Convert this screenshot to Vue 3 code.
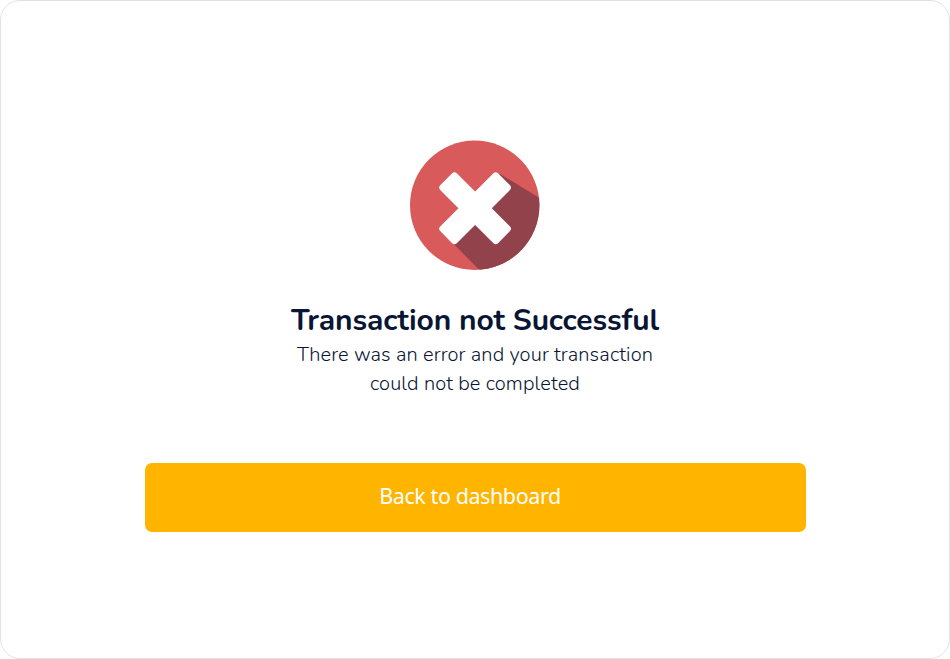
<script setup>
const message = ['There was an error and your transaction', 'could not be completed']
</script>

<template>
  <main class="card">
    <svg class="status-icon" viewBox="0 0 130 130" aria-hidden="true">
      <defs>
        <clipPath id="disc"><circle cx="64.7" cy="65.2" r="64.7" /></clipPath>
      </defs>
      <circle cx="64.7" cy="65.2" r="64.7" fill="#d95a5a" />
      <path clip-path="url(#disc)" d="M90 34 L130 58.3 V130 H69.5 L43.5 103.8 Z" fill="#91424b" />
      <g transform="translate(65.1 68.2) rotate(45)" fill="#fff">
        <rect x="-40.9" y="-11.75" width="81.8" height="23.5" rx="3.6" />
        <rect x="-11.75" y="-40.9" width="23.5" height="81.8" rx="3.6" />
      </g>
    </svg>
    <h1 class="title">Transaction not Successful</h1>
    <p class="message">
      <span v-for="line in message" :key="line" class="line">{{ line }}</span>
    </p>
    <button class="action" type="button">Back to dashboard</button>
  </main>
</template>

<style>
body {
  background: #fff;
}
</style>

<style scoped>
.card {
  box-sizing: border-box;
  width: 950px;
  height: 659px;
  padding-top: 139px;
  display: flex;
  flex-direction: column;
  align-items: center;
  border: 1px solid #e2e2e5;
  border-radius: 20px;
  background: #fff;
  color: #091534;
  font-family: Nunito, Lato, sans-serif;
}
.status-icon {
  width: 130px;
  height: 130px;
  flex: none;
}
.title {
  margin: 31px 0 0;
  font-size: 30px;
  font-weight: 700;
  line-height: 39px;
  letter-spacing: -0.14px;
  white-space: nowrap;
}
.message {
  margin: 0;
  font-size: 20px;
  font-weight: 300;
  line-height: 29px;
  letter-spacing: 0.13px;
  text-align: center;
}
.line {
  display: block;
  white-space: nowrap;
}
.action {
  width: 661px;
  height: 69px;
  margin: 65px 0 0;
  padding: 0 10px 3px 0;
  border: 0;
  border-radius: 7px;
  background: #ffb400;
  color: #fff;
  font-family: "Segoe UI", "Noto Sans", "Open Sans", sans-serif;
  font-size: 21.5px;
  line-height: 30px;
  letter-spacing: -0.42px;
}
</style>
